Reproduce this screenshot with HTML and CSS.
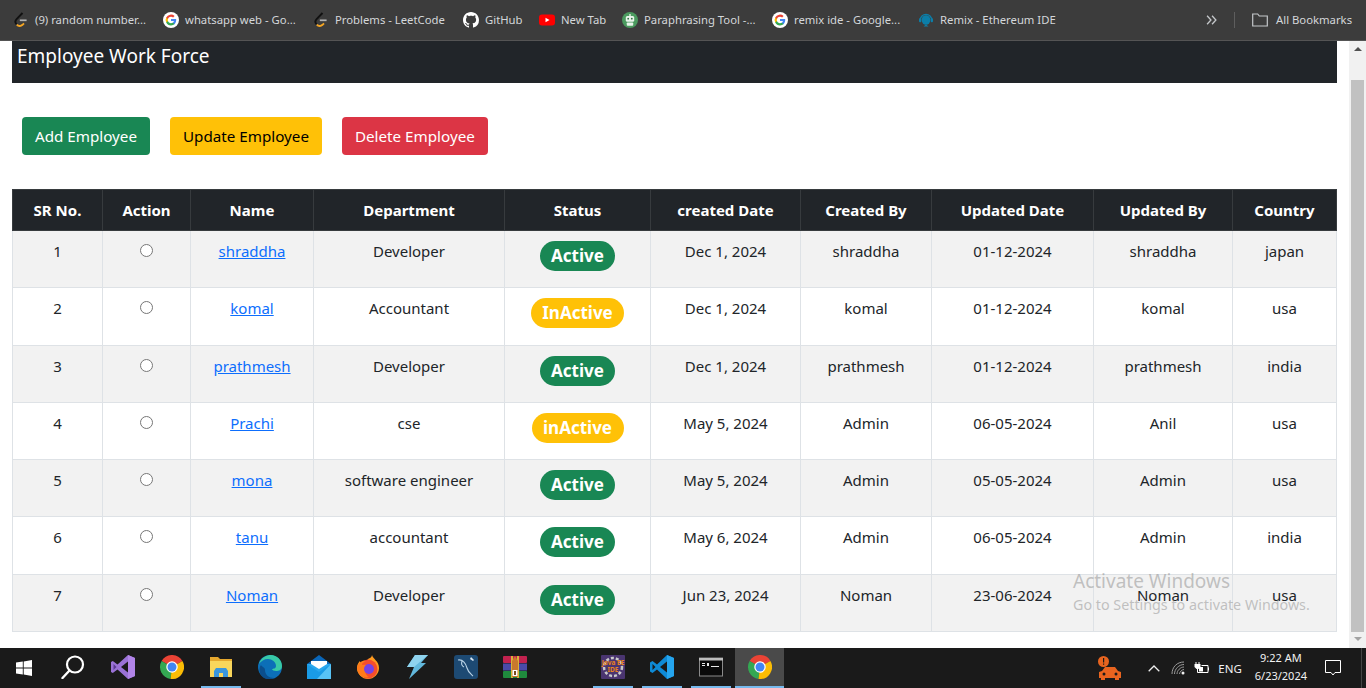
FILE: index.html
```html
<!DOCTYPE html>
<html lang="en">
<head>
    <meta charset="UTF-8">
    <meta name="viewport" content="width=device-width, initial-scale=1.0">
    <title>Employee Work Force</title>
    <link rel="stylesheet" href="styles.css">
</head>
<body>
    <svg class="icon-defs" xmlns="http://www.w3.org/2000/svg">
        <symbol id="i-leet" viewBox="0 0 16 16">
            <path d="M9.5 1 3.6 7.2c-1.5 1.6-1.5 3.7 0 5.2" fill="none" stroke="#111" stroke-width="1.9"/>
            <path d="M3.8 12.6c1.6 1.7 4 1.8 5.700.2l1.500-1.500" fill="none" stroke="#f5a623" stroke-width="1.9"/>
            <path d="M6.800 8.300h6.800" stroke="#b3b3b3" stroke-width="1.700"/>
        </symbol>
        <symbol id="i-google" viewBox="0 0 16 16">
            <circle cx="8" cy="8" r="8" fill="#fff"/>
            <path d="M13.2 8.1c0-.4 0-.8-.1-1.2H8v2.2h2.9c-.1.7-.5 1.3-1.1 1.7v1.4h1.8c1-1 1.6-2.4 1.6-4.1z" fill="#4285f4"/>
            <path d="M8 13.400c1.500 0 2.700-.5 3.600-1.300l-1.800-1.400c-.5.300-1.100.5-1.800.5-1.400 0-2.600-.9-3-2.200H3.200v1.400A5.400 5.400 0 0 0 8 13.400z" fill="#34a853"/>
            <path d="M5 9c-.2-.7-.2-1.400 0-2.100V5.500H3.200a5.400 5.400 0 0 0 0 4.900z" fill="#fbbc05"/>
            <path d="M8 4.700c.8 0 1.500.3 2.100.8l1.500-1.500A5.300 5.300 0 0 0 3.200 5.500L5 6.900c.4-1.300 1.600-2.200 3-2.200z" fill="#ea4335"/>
        </symbol>
        <symbol id="i-github" viewBox="0 0 16 16">
            <path fill="#fff" d="M8 0C3.58 0 0 3.58 0 8c0 3.54 2.29 6.53 5.47 7.59.4.07.55-.17.55-.38 0-.19-.01-.82-.01-1.49-2.01.37-2.53-.49-2.69-.94-.09-.23-.48-.94-.82-1.13-.28-.15-.68-.52-.01-.53.63-.01 1.08.58 1.23.82.72 1.21 1.87.87 2.33.66.07-.52.28-.87.51-1.07-1.78-.2-3.64-.89-3.64-3.95 0-.87.31-1.59.82-2.15-.08-.2-.36-1.02.08-2.12 0 0 .67-.21 2.2.82.64-.18 1.32-.27 2-.27s1.36.09 2 .27c1.53-1.04 2.2-.82 2.2-.82.44 1.1.16 1.92.08 2.12.51.56.82 1.27.82 2.15 0 3.07-1.87 3.75-3.65 3.95.29.25.54.73.54 1.48 0 1.07-.01 1.93-.01 2.2 0 .21.15.46.55.38A8.013 8.013 0 0 0 16 8c0-4.42-3.58-8-8-8z"/>
        </symbol>
        <symbol id="i-youtube" viewBox="0 0 16 16">
            <rect x="0" y="2.500" width="16" height="11" rx="3" fill="#f00"/>
            <path d="M6.500 5.700v4.600L10.500 8z" fill="#fff"/>
        </symbol>
        <symbol id="i-robot" viewBox="0 0 16 16">
            <circle cx="8" cy="8" r="8" fill="#4b9a5f"/>
            <path d="M8 2v2" stroke="#fff" stroke-width="1.200"/>
            <rect x="3.800" y="4" width="8.400" height="5.800" rx="1.500" fill="#e8f3ea"/>
            <circle cx="6.200" cy="6.700" r=".9" fill="#2f6e40"/>
            <circle cx="9.800" cy="6.700" r=".9" fill="#2f6e40"/>
            <rect x="4.800" y="10.500" width="6.400" height="3.200" rx=".8" fill="#e8f3ea"/>
        </symbol>
        <symbol id="i-remix" viewBox="0 0 16 16">
            <path d="M2.300 8a5.700 5.700 0 0 1 11.400 0" fill="none" stroke="#0c7ea8" stroke-width="1.300"/>
            <ellipse cx="8" cy="8" rx="4.300" ry="4.800" fill="#0c7ea8"/>
            <rect x="1" y="6.300" width="2.300" height="4" rx="1" fill="#0c7ea8"/>
            <rect x="12.700" y="6.300" width="2.300" height="4" rx="1" fill="#0c7ea8"/>
            <path d="M5.500 14.500h5L8 12.500z" fill="#0c7ea8"/>
        </symbol>
        <symbol id="i-chrome" viewBox="0 0 48 48">
            <path d="M24 24 3.200 12A24 24 0 0 1 44.800 12z" fill="#ea4335"/>
            <path d="M24 24 3.200 12A24 24 0 0 0 21 47.800z" fill="#34a853"/>
            <path d="M24 24 44.800 12A24 24 0 0 1 21 47.800z" fill="#fbbc05"/>
            <circle cx="24" cy="24" r="11.500" fill="#fff"/>
            <circle cx="24" cy="24" r="9" fill="#4285f4"/>
        </symbol>
    </svg>

    <nav class="bookmarks">
        <a class="bookmark"><svg class="bm-icon"><use href="#i-leet"/></svg>(9) random number...</a>
        <a class="bookmark"><svg class="bm-icon"><use href="#i-google"/></svg>whatsapp web - Go...</a>
        <a class="bookmark"><svg class="bm-icon"><use href="#i-leet"/></svg>Problems - LeetCode</a>
        <a class="bookmark bookmark-github"><svg class="bm-icon"><use href="#i-github"/></svg>GitHub</a>
        <a class="bookmark bookmark-newtab"><svg class="bm-icon"><use href="#i-youtube"/></svg>New Tab</a>
        <a class="bookmark"><svg class="bm-icon"><use href="#i-robot"/></svg>Paraphrasing Tool -...</a>
        <a class="bookmark bookmark-remix"><svg class="bm-icon"><use href="#i-google"/></svg>remix ide - Google...</a>
        <a class="bookmark"><svg class="bm-icon"><use href="#i-remix"/></svg>Remix - Ethereum IDE</a>
        <svg class="bm-more" viewBox="0 0 10 9"><path d="M1 .7 4.500 4.500 1 8.300M5.500 .7 9 4.500 5.500 8.300" fill="none" stroke="#c4c7ca" stroke-width="1.200"/></svg>
        <span class="bm-divider"></span>
        <a class="bm-all">
            <svg class="bm-folder" viewBox="0 0 16 14"><path d="M.7 1h5l1.600 2h8v10H.7z" fill="none" stroke="#c4c7ca" stroke-width="1.200"/></svg>
            All Bookmarks
        </a>
    </nav>

    <div class="window">
        <main class="page">
            <header class="title-bar">Employee Work Force</header>

            <div class="actions">
                <button class="btn btn-green">Add Employee</button>
                <button class="btn btn-yellow">Update Employee</button>
                <button class="btn btn-red">Delete Employee</button>
            </div>

            <table class="employees">
                <colgroup>
                    <col class="c-sr"><col class="c-action"><col class="c-name"><col class="c-dept"><col class="c-status">
                    <col class="c-created"><col class="c-by"><col class="c-updated"><col class="c-upby"><col class="c-country">
                </colgroup>
                <thead>
                    <tr>
                        <th>SR No.</th><th>Action</th><th>Name</th><th>Department</th><th>Status</th>
                        <th>created Date</th><th>Created By</th><th>Updated Date</th><th>Updated By</th><th>Country</th>
                    </tr>
                </thead>
                <tbody>
                    <tr>
                        <td>1</td><td><input type="radio" name="emp"></td><td><a href="#">shraddha</a></td><td>Developer</td>
                        <td><span class="badge badge-green">Active</span></td>
                        <td>Dec 1, 2024</td><td>shraddha</td><td>01-12-2024</td><td>shraddha</td><td>japan</td>
                    </tr>
                    <tr>
                        <td>2</td><td><input type="radio" name="emp"></td><td><a href="#">komal</a></td><td>Accountant</td>
                        <td><span class="badge badge-yellow">InActive</span></td>
                        <td>Dec 1, 2024</td><td>komal</td><td>01-12-2024</td><td>komal</td><td>usa</td>
                    </tr>
                    <tr>
                        <td>3</td><td><input type="radio" name="emp"></td><td><a href="#">prathmesh</a></td><td>Developer</td>
                        <td><span class="badge badge-green">Active</span></td>
                        <td>Dec 1, 2024</td><td>prathmesh</td><td>01-12-2024</td><td>prathmesh</td><td>india</td>
                    </tr>
                    <tr>
                        <td>4</td><td><input type="radio" name="emp"></td><td><a href="#">Prachi</a></td><td>cse</td>
                        <td><span class="badge badge-yellow">inActive</span></td>
                        <td>May 5, 2024</td><td>Admin</td><td>06-05-2024</td><td>Anil</td><td>usa</td>
                    </tr>
                    <tr>
                        <td>5</td><td><input type="radio" name="emp"></td><td><a href="#">mona</a></td><td>software engineer</td>
                        <td><span class="badge badge-green">Active</span></td>
                        <td>May 5, 2024</td><td>Admin</td><td>05-05-2024</td><td>Admin</td><td>usa</td>
                    </tr>
                    <tr>
                        <td>6</td><td><input type="radio" name="emp"></td><td><a href="#">tanu</a></td><td>accountant</td>
                        <td><span class="badge badge-green">Active</span></td>
                        <td>May 6, 2024</td><td>Admin</td><td>06-05-2024</td><td>Admin</td><td>india</td>
                    </tr>
                    <tr>
                        <td>7</td><td><input type="radio" name="emp"></td><td><a href="#">Noman</a></td><td>Developer</td>
                        <td><span class="badge badge-green">Active</span></td>
                        <td>Jun 23, 2024</td><td>Noman</td><td>23-06-2024</td><td>Noman</td><td>usa</td>
                    </tr>
                </tbody>
            </table>

            <div class="watermark">
                <div class="watermark-title">Activate Windows</div>
                <div class="watermark-sub">Go to Settings to activate Windows.</div>
            </div>
        </main>

        <div class="scrollbar">
            <span class="arrow arrow-up"></span>
            <span class="thumb"></span>
            <span class="arrow arrow-down"></span>
        </div>
    </div>

    <footer class="taskbar">
        <div class="tb-item tb-start">
            <svg class="tb-icon-start" viewBox="0 0 16 16"><path d="M0 2.500 6.800 1.500v6H0zM7.700 1.400 16 0v7.500H7.700zM0 8.400h6.800v6L0 13.500zM7.700 8.400H16V16l-8.300-1.400z" fill="#fff"/></svg>
        </div>
        <div class="tb-item tb-search">
            <svg class="tb-icon" viewBox="0 0 24 24"><circle cx="14" cy="9.500" r="8" fill="none" stroke="#fff" stroke-width="2.200"/><path d="M8.500 15.500 1.500 23" stroke="#fff" stroke-width="2.400" stroke-linecap="round"/></svg>
        </div>
        <div class="tb-item">
            <svg class="tb-icon" viewBox="0 0 24 24"><path d="M17 0 24 3v18l-7 3L6.500 14.500 1.800 18 0 17V7l1.800-1 4.700 3.500z" fill="#9a72d6"/><path d="M2.500 9v6l3-3z" fill="#5b3a93"/><path d="M17 0 24 3v18l-7 3z" fill="#b184e8"/><path d="M17 6.500v11L10 12z" fill="#1a1a1a"/></svg>
        </div>
        <div class="tb-item"><svg class="tb-icon"><use href="#i-chrome"/></svg></div>
        <div class="tb-item tb-running">
            <svg class="tb-icon" viewBox="0 0 24 24"><path d="M1 2h8l2 2h12v18H1z" fill="#e5a82e"/><path d="M1 6h22v16H1z" fill="#f9d65c"/><path d="M7 13h10l2 3v6H5v-6z" fill="#3a96dd"/><path d="M10 18h4v4h-4z" fill="#f9d65c"/></svg>
        </div>
        <div class="tb-item">
            <svg class="tb-icon" viewBox="0 0 24 24"><circle cx="12" cy="12" r="12" fill="#0c6fb8"/><path d="M1 9C3 2 9 0 13 0c6 0 11 5 11 11 0 4-3 5-6 5-2 0-4-1-4-2 0 0 4 0 4-3 0-4-4-7-8-7S3 6 1 9z" fill="#38c9a6"/><path d="M7 15c0 5 4 8 9 8-3 2-10 2-13-3-2-3-2-8 0-10 1 2 4 2 4 5z" fill="#0b4e8c"/></svg>
        </div>
        <div class="tb-item">
            <svg class="tb-icon" viewBox="0 0 24 24"><path d="M0 9 12 0l12 9z" fill="#0a66b8"/><path d="M0 9h24v15H0z" fill="#2aa8ee"/><path d="M4 6h16v3l-8 5-8-5z" fill="#fff"/><path d="M0 9l12 8 12-8v15H0z" fill="#1a9be6"/><path d="M24 9v15H10z" fill="#58c3f5"/></svg>
        </div>
        <div class="tb-item">
            <svg class="tb-icon" viewBox="0 0 24 24"><path d="M16 0c1 4 7 6 7 13 0 6-5 11-11 11S1 19 1 13c0-4 2-6 3-7 0 2 1 3 2 3 1-3 5-3 6-5 2-1 4-2 4-4z" fill="#ff9a1f"/><circle cx="12" cy="14" r="9.500" fill="#f2402f" opacity=".85"/><path d="M1 13c1-6 6-8 9-7-3 1-4 3-4 4 3-1 8 0 8 3 0 2-3 1-3 1-3 2-1 7 2 8-6 2-12-3-12-9z" fill="#ff7a1a"/><circle cx="13" cy="14" r="5" fill="#7542e5"/></svg>
        </div>
        <div class="tb-item">
            <svg class="tb-icon" viewBox="0 0 24 24"><path d="M10 0h13l-7 8h5L4 24l5-12H2z" fill="#62b8dc"/><path d="M10 0h13L9 12H2z" fill="#8fd3ee"/></svg>
        </div>
        <div class="tb-item">
            <svg class="tb-icon" viewBox="0 0 24 24"><rect width="24" height="24" rx="3" fill="#1d4a73"/><path d="M4 5c5-1 8 4 9 8s4 6 6 8M8 6c-1 3 0 5 2 6" fill="none" stroke="#b8d2e6" stroke-width="1.100"/><path d="M17 2l3 3-1 1-3-2z" fill="#dbe8f2"/></svg>
        </div>
        <div class="tb-item">
            <svg class="tb-icon" viewBox="0 0 24 24"><rect y="1" width="24" height="7" rx="1" fill="#c2224f"/><rect y="8.500" width="24" height="7" fill="#4b4aa8"/><rect y="16" width="24" height="7" rx="1" fill="#1f8a3d"/><path d="M8 1h2v22H8zM14 1h2v22h-2z" fill="#d9b23a"/><path d="M9 6l3-5 3 5v16H9z" fill="#c9782d"/><rect x="9.500" y="15" width="5" height="6" fill="#fff"/><rect x="11" y="16" width="2" height="4" fill="#7a4a1d"/></svg>
        </div>
        <div class="tb-item"></div>
        <div class="tb-item tb-running">
            <svg class="tb-icon" viewBox="0 0 24 24"><rect width="24" height="24" rx="1" fill="#4a3570"/><circle cx="12" cy="12" r="9" fill="none" stroke="#c9c9c9" stroke-width="2.500" stroke-dasharray="3 2"/><text class="java-label" x="12" y="10" text-anchor="middle">Java EE</text><text class="java-label" x="12" y="17" text-anchor="middle">IDE</text></svg>
        </div>
        <div class="tb-item tb-running">
            <svg class="tb-icon" viewBox="0 0 24 24"><path d="M17 0 24 3v18l-7 3L7 14.500 2.500 18 0 16.500v-9L2.500 6 7 9.500z" fill="#0e8ad6"/><path d="M2.500 9v6l3-3z" fill="#1a1a1a"/><path d="M17 0 24 3v18l-7 3z" fill="#25a5ee"/><path d="M17 6.500 10 12l7 5.500z" fill="#1a1a1a"/></svg>
        </div>
        <div class="tb-item tb-running">
            <svg class="tb-icon" viewBox="0 0 24 24"><rect x=".5" y="3" width="23" height="18" fill="#0a0a0a" stroke="#8a8a8a"/><rect y="3" width="24" height="2.500" fill="#bdbdbd"/><path d="M3 8h3v1H3zM3 10h3v1H3zM8 8h2v3H8zM12 11h8v1h-8z" fill="#e8e8e8"/></svg>
        </div>
        <div class="tb-item tb-running tb-active"><svg class="tb-icon"><use href="#i-chrome"/></svg></div>

        <div class="tray">
            <svg class="tray-car" viewBox="0 0 24 24"><circle cx="5.500" cy="5.500" r="5.500" fill="#e8641f"/><path d="M5 2h1.200v4.500H5zM5 7.500h1.200v1.300H5z" fill="#1a1a1a"/><path d="M3 24v-2H1v-6l3-1 3-4h10l3 4 3 1v6h-2v2h-4v-2H7v2z" fill="#e8641f"/><circle cx="6" cy="18" r="1.500" fill="#1a1a1a"/><circle cx="18" cy="18" r="1.500" fill="#1a1a1a"/></svg>
            <svg class="tray-chevron" viewBox="0 0 12 7"><path d="M.7 6.300 6 1l5.300 5.300" fill="none" stroke="#eee" stroke-width="1.300"/></svg>
            <svg class="tray-wifi" viewBox="0 0 14 14"><path d="M1 13C1 6 6 1 13 1M3.500 13C3.500 8 8 3.500 13 3.500M6 13c0-3.500 3.500-7 7-7" fill="none" stroke="#9a9a9a" stroke-width="1"/><path d="M8.500 13c0-2 2.500-4.500 4.500-4.500" fill="none" stroke="#9a9a9a"/><circle cx="12" cy="12" r="1.500" fill="#eee"/></svg>
            <svg class="tray-battery" viewBox="0 0 16 12"><path d="M3 0v2M6 0v2" stroke="#fff" stroke-width="1"/><path d="M1.500 2h6v3L5.500 7h-2l-2-2z" fill="#fff"/><path d="M4.500 7v3.500H15v-7H8.500" fill="none" stroke="#fff"/><rect x="6" y="5" width="4" height="4.500" fill="#fff"/><rect x="15" y="5.500" width="1" height="3" fill="#fff"/></svg>
            <span class="tray-lang">ENG</span>
            <div class="tray-clock">
                <div>9:22 AM</div>
                <div>6/23/2024</div>
            </div>
            <svg class="tray-note" viewBox="0 0 16 16"><path d="M.5.500h15v12H10l-2 2.500-2-2.500H.5z" fill="none" stroke="#fff"/></svg>
            <span class="tray-desktop"></span>
        </div>
    </footer>
</body>
</html>
```

FILE: styles.css
```css
html, body {
    height: 100%;
}
body {
    margin: 0;
    display: flex;
    flex-direction: column;
    overflow: hidden;
    font-family: "Noto Sans", "Open Sans", sans-serif;
    font-size: 15px;
    color: #212529;
    background: #fff;
}
.icon-defs {
    display: none;
}

/* bookmarks bar */
.bookmarks {
    height: 40px;
    box-sizing: content-box;
    flex-shrink: 0;
    display: flex;
    align-items: center;
    padding-left: 13px;
    background: #3c3c3c;
    border-bottom: 1px solid #545454;
    color: #d4d7da;
    font-size: 11.3px;
    line-height: 38px;
    white-space: nowrap;
}
.bookmark {
    width: 150px;
    display: flex;
    align-items: center;
}
.bookmark-github {
    width: 76px;
}
.bookmark-newtab {
    width: 83px;
}
.bookmark-remix {
    width: 146px;
}
.bm-icon {
    width: 16px;
    height: 16px;
    margin-right: 6px;
    flex-shrink: 0;
}
.bm-more {
    width: 11px;
    height: 10px;
    margin-left: 138px;
}
.bm-divider {
    width: 1px;
    height: 16px;
    margin-left: 17px;
    background: #5e5e5e;
}
.bm-all {
    display: flex;
    align-items: center;
    margin-left: 17px;
}
.bm-folder {
    width: 16px;
    height: 14px;
    margin-right: 8px;
}

/* page area */
.window {
    flex: 1;
    min-height: 0;
    display: flex;
}
.page {
    flex: 1;
    min-width: 0;
    padding: 0 12px;
    position: relative;
    overflow: hidden;
}
.title-bar {
    height: 42px;
    box-sizing: border-box;
    padding: 2px 5px;
    background: #212529;
    color: #fff;
    font-size: 19px;
}
.actions {
    display: flex;
    gap: 20px;
    padding: 34px 10px;
}
.btn {
    height: 38px;
    padding: 0 13px;
    border: none;
    border-radius: 4px;
    font-family: inherit;
    font-size: 15.2px;
    color: #fff;
}
.btn-green {
    background: #198754;
}
.btn-yellow {
    background: #ffc107;
    color: #000;
}
.btn-red {
    background: #dc3545;
}

/* table */
.employees {
    width: 1324px;
    table-layout: fixed;
    border-collapse: collapse;
    text-align: center;
}
.c-sr { width: 90px; }
.c-action { width: 88px; }
.c-name { width: 123px; }
.c-dept { width: 191px; }
.c-status { width: 146px; }
.c-created { width: 150px; }
.c-by { width: 131px; }
.c-updated { width: 162px; }
.c-upby { width: 139px; }
.c-country { width: 104px; }

.employees th {
    height: 41px;
    box-sizing: border-box;
    padding: 0 0 1px;
    background: #212529;
    border: 1px solid #373b3e;
    color: #fff;
    font-weight: 700;
}
.employees td {
    height: 57.25px;
    box-sizing: border-box;
    padding: 8px 4px;
    vertical-align: top;
    border: 1px solid #dee2e6;
    line-height: 24px;
}
.employees tbody tr:nth-child(odd) td {
    background: #f2f2f2;
}
.employees a {
    color: #0d6efd;
}
.employees input {
    margin: 5px 0 0;
    vertical-align: top;
}
.badge {
    display: inline-block;
    vertical-align: top;
    height: 30px;
    margin-top: 2px;
    padding: 0 11.5px;
    border-radius: 15px;
    color: #fff;
    font-size: 17px;
    font-weight: 700;
    line-height: 30px;
}
.badge-green {
    background: #198754;
}
.badge-yellow {
    background: #ffc107;
}

.watermark {
    position: absolute;
    left: 1073px;
    top: 527px;
    color: rgba(140, 140, 140, 0.5);
    pointer-events: none;
}
.watermark-title {
    font-size: 19px;
    line-height: 27px;
}
.watermark-sub {
    font-size: 14.3px;
    line-height: 20px;
}

/* scrollbar */
.scrollbar {
    width: 17px;
    flex-shrink: 0;
    display: flex;
    flex-direction: column;
    align-items: center;
    background: #f1f1f1;
}
.arrow {
    width: 0;
    height: 0;
    border-left: 4px solid transparent;
    border-right: 4px solid transparent;
}
.arrow-up {
    margin-top: 6px;
    border-bottom: 4px solid #505050;
}
.arrow-down {
    margin-top: 5px;
    border-top: 4px solid #a3a3a3;
}
.thumb {
    width: 13px;
    height: 552px;
    margin-top: 29px;
    background: #c1c1c1;
}

/* taskbar */
.taskbar {
    height: 40px;
    flex-shrink: 0;
    display: flex;
    background: #1a1a1a;
    color: #f2f2f2;
}
.tb-item {
    width: 49px;
    height: 40px;
    display: flex;
    align-items: center;
    justify-content: center;
    position: relative;
}
.tb-start {
    width: 48px;
}
.tb-search {
    width: 50px;
}
.tb-icon {
    width: 24px;
    height: 24px;
    margin-top: -2px;
}
.tb-icon-start {
    width: 16px;
    height: 16px;
}
.tb-running::after {
    content: "";
    position: absolute;
    left: 5px;
    right: 4px;
    bottom: 0;
    height: 2px;
    background: #76b9ed;
}
.tb-active {
    background: #4a4a4a;
}
.tb-active::after {
    left: 0;
    right: 0;
}
.java-label {
    font-size: 6.5px;
    font-weight: 700;
    fill: #e8821e;
}
.tray {
    flex: 1;
    display: flex;
    align-items: center;
    justify-content: flex-end;
}
.tray-car {
    width: 24px;
    height: 24px;
    margin-right: 26px;
}
.tray-chevron {
    width: 12px;
    height: 7px;
    margin-right: 11px;
}
.tray-wifi {
    width: 14px;
    height: 14px;
    margin-right: 8px;
}
.tray-battery {
    width: 16px;
    height: 12px;
    margin-right: 9px;
}
.tray-lang {
    margin-right: 13px;
    font-size: 11.5px;
}
.tray-clock {
    text-align: center;
    line-height: 18px;
    margin-top: -2px;
    margin-right: 18px;
    font-size: 11px;
}
.tray-note {
    width: 16px;
    height: 16px;
    margin-right: 20px;
}
.tray-desktop {
    width: 1px;
    height: 40px;
    margin-right: 4px;
    background: #444;
}
```
